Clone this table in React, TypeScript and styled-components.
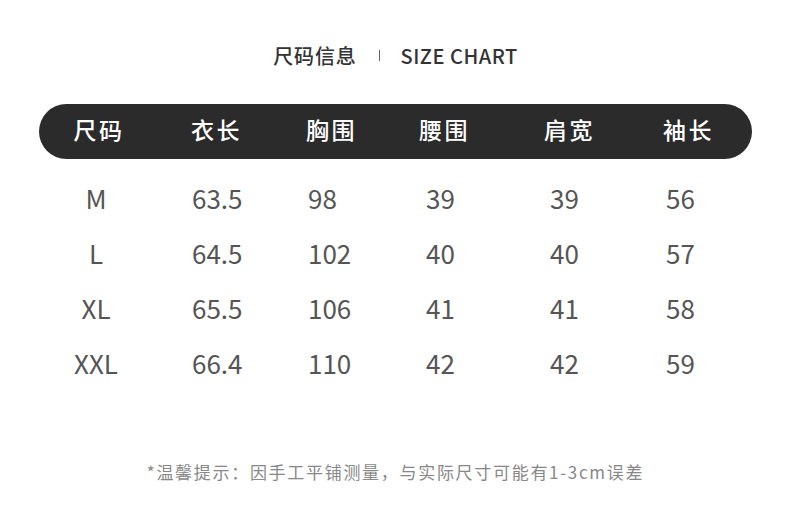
import React from 'react';
import styled, { createGlobalStyle } from 'styled-components';

const GlobalStyle = createGlobalStyle`
  html, body {
    margin: 0;
    padding: 0;
    background: #fff;
  }
  body {
    font-family: "Noto Sans CJK SC", "Noto Sans", sans-serif;
  }
`;

const Page = styled.div`
  width: 790px;
  height: 531px;
  box-sizing: border-box;
  padding: 40px 38px 0 39px;
  display: flex;
  flex-direction: column;
`;

const Title = styled.div`
  display: flex;
  justify-content: center;
  align-items: center;
  height: 30px;
  color: #333;
`;

const TitleCn = styled.span`
  font-size: 20px;
  font-weight: 500;
  letter-spacing: 0.8px;
`;

const Divider = styled.span`
  width: 1px;
  height: 11px;
  background: #666;
  margin: 0 21px 0 22px;
`;

const TitleEn = styled.span`
  font-size: 20px;
  font-weight: 500;
  letter-spacing: 0.5px;
`;

const Grid = styled.div`
  display: grid;
  grid-template-columns: 153px 116px 118px 124px 116px 1fr;
  align-items: center;
`;

const HeaderBar = styled(Grid)`
  margin-top: 34px;
  margin-bottom: 11px;
  height: 55px;
  box-sizing: border-box;
  padding-bottom: 5px;
  border-radius: 28px;
  background: #2b2b2b;
  color: #fff;
`;

const HeadCell = styled.div<{ $nudge?: number }>`
  font-size: 23px;
  font-weight: 500;
  letter-spacing: 2.5px;
  margin-left: ${(p) => p.$nudge ?? 0}px;
`;

const FirstHead = styled(HeadCell)`
  width: 120px;
  text-align: center;
`;

const Row = styled(Grid)`
  height: 55px;
  color: #555;
  font-size: 26px;
`;

const Cell = styled.div``;

const FirstCell = styled(Cell)`
  width: 114px;
  text-align: center;
`;

const Note = styled.div`
  margin-top: auto;
  margin-bottom: 47px;
  text-align: center;
  font-size: 17px;
  letter-spacing: 1.7px;
  color: #888;
`;

const headers = [
  { label: '衣长', nudge: -1 },
  { label: '胸围', nudge: -2 },
  { label: '腰围', nudge: -7 },
  { label: '肩宽', nudge: -6 },
  { label: '袖长', nudge: -3 },
];

const rows = [
  ['M', '63.5', '98', '39', '39', '56'],
  ['L', '64.5', '102', '40', '40', '57'],
  ['XL', '65.5', '106', '41', '41', '58'],
  ['XXL', '66.4', '110', '42', '42', '59'],
];

export default function App() {
  return (
    <Page>
      <GlobalStyle />
      <Title>
        <TitleCn>尺码信息</TitleCn>
        <Divider />
        <TitleEn>SIZE CHART</TitleEn>
      </Title>
      <HeaderBar>
        <FirstHead>尺码</FirstHead>
        {headers.map((h) => (
          <HeadCell key={h.label} $nudge={h.nudge}>
            {h.label}
          </HeadCell>
        ))}
      </HeaderBar>
      {rows.map((r) => (
        <Row key={r[0]}>
          <FirstCell>{r[0]}</FirstCell>
          {r.slice(1).map((v, i) => (
            <Cell key={i}>{v}</Cell>
          ))}
        </Row>
      ))}
      <Note>*温馨提示：因手工平铺测量，与实际尺寸可能有1-3cm误差</Note>
    </Page>
  );
}
